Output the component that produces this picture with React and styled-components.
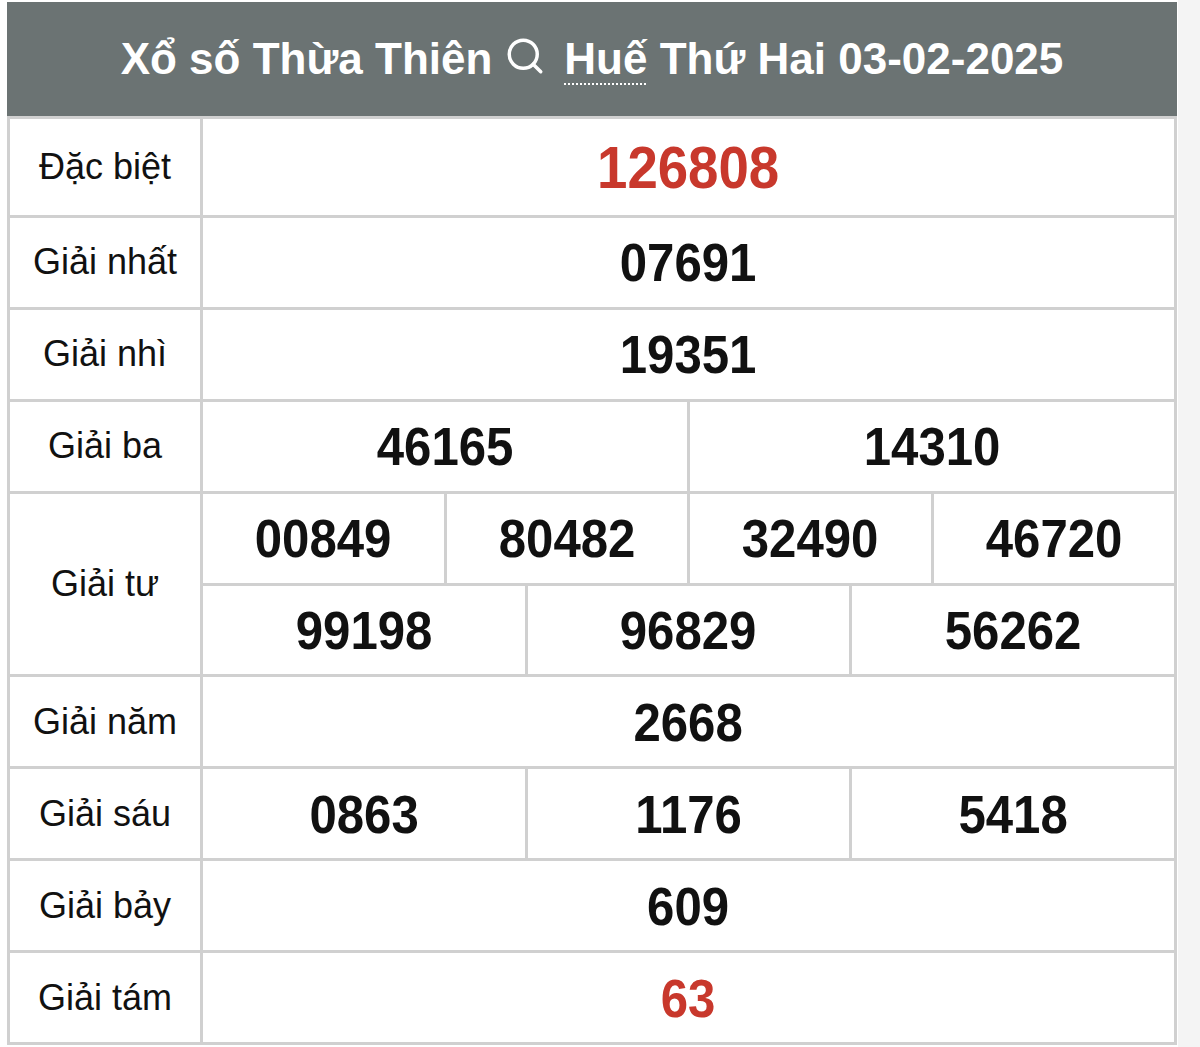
import React from "react";
import styled, { createGlobalStyle } from "styled-components";
import { Search } from "lucide-react";

const GlobalStyle = createGlobalStyle`
  html, body {
    margin: 0;
    padding: 0;
    background: #f4f4f4;
  }
  body {
    font-family: "Liberation Sans", Arial, sans-serif;
  }
`;

const rows = [
  { label: "Đặc biệt", groups: [["126808"]], special: true },
  { label: "Giải nhất", groups: [["07691"]] },
  { label: "Giải nhì", groups: [["19351"]] },
  { label: "Giải ba", groups: [["46165", "14310"]] },
  {
    label: "Giải tư",
    groups: [
      ["00849", "80482", "32490", "46720"],
      ["99198", "96829", "56262"],
    ],
  },
  { label: "Giải năm", groups: [["2668"]] },
  { label: "Giải sáu", groups: [["0863", "1176", "5418"]] },
  { label: "Giải bảy", groups: [["609"]] },
  { label: "Giải tám", groups: [["63"]], red: true },
];

export default function App() {
  return (
    <Page>
      <GlobalStyle />
      <Sheet>
        <Table>
          <Header>
            <Title>
              Xổ số Thừa Thiên
              <SearchIcon size={42} strokeWidth={2} />
              <Place>Huế</Place> Thứ Hai 03-02-2025
            </Title>
          </Header>
          {rows.map((row) => (
            <Row key={row.label}>
              <Label>{row.label}</Label>
              <Values>
                {row.groups.map((group, i) => (
                  <NumberLine key={i} $cols={group.length}>
                    {group.map((n) => (
                      <Cell key={n} $tall={row.special}>
                        <Num $red={row.special || row.red} $big={row.special}>
                          {n}
                        </Num>
                      </Cell>
                    ))}
                  </NumberLine>
                ))}
              </Values>
            </Row>
          ))}
        </Table>
      </Sheet>
    </Page>
  );
}

const Page = styled.div`
  min-height: 1047px;
  background: #f4f4f4;
`;

const Sheet = styled.div`
  width: 1178px;
  min-height: 1047px;
  box-sizing: border-box;
  padding: 2px 1px 4px 7px;
  background: #ffffff;
`;

const Table = styled.div`
  display: flex;
  flex-direction: column;
  gap: 3px;
  width: 1170px;
  box-sizing: border-box;
  border: 3px solid #d0d0d0;
  border-top: none;
  background: #d0d0d0;
`;

const Header = styled.div`
  height: 114px;
  display: flex;
  align-items: center;
  justify-content: center;
  background: #6b7373;
  margin: 0 -3px;
`;

const Title = styled.h1`
  margin: 0;
  display: flex;
  align-items: center;
  color: #ffffff;
  font-size: 44px;
  font-weight: 700;
  white-space: pre;
`;

const SearchIcon = styled(Search)`
  margin: 0 18px 6px 12px;
`;

const Place = styled.span`
  text-decoration: underline dotted #ffffff;
  text-decoration-thickness: 2px;
  text-underline-offset: 9px;
`;

const Row = styled.div`
  display: grid;
  grid-template-columns: 190px 1fr;
  gap: 3px;
`;

const Label = styled.div`
  display: flex;
  align-items: center;
  justify-content: center;
  background: #ffffff;
  color: #111111;
  font-size: 36px;
`;

const Values = styled.div`
  display: flex;
  flex-direction: column;
  gap: 3px;
`;

const NumberLine = styled.div`
  display: grid;
  grid-template-columns: repeat(${(p) => p.$cols}, 1fr);
  gap: 3px;
`;

const Cell = styled.div`
  height: ${(p) => (p.$tall ? "96px" : "88.9px")};
  display: flex;
  align-items: center;
  justify-content: center;
  background: #ffffff;
`;

const Num = styled.span`
  display: inline-block;
  transform: scaleX(0.91);
  font-size: ${(p) => (p.$big ? "60px" : "54px")};
  font-weight: 700;
  color: ${(p) => (p.$red ? "#c8382c" : "#111111")};
`;
